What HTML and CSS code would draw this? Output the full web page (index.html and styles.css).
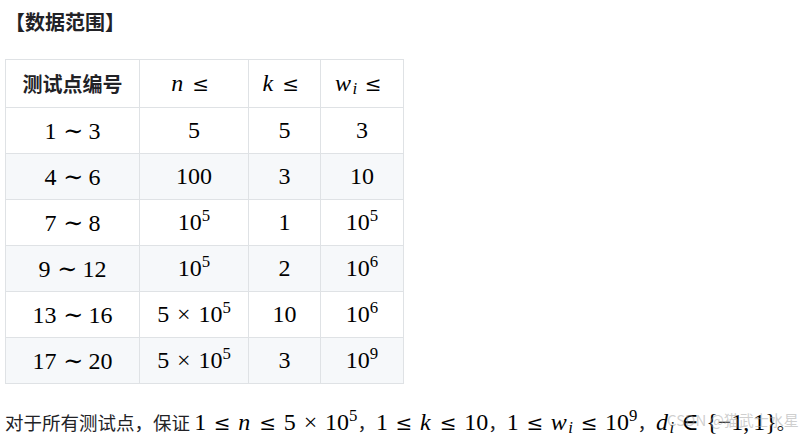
FILE: index.html
```html
<!DOCTYPE html>
<html lang="zh">
<head>
<meta charset="utf-8">
<title>数据范围</title>
<link rel="stylesheet" href="styles.css">
</head>
<body>
<div class="page">
  <p class="title">【数据范围】</p>
  <table class="range">
    <colgroup>
      <col class="c1"><col class="c2"><col class="c3"><col class="c4">
    </colgroup>
    <thead>
      <tr>
        <th class="cjk">测试点编号</th>
        <th><span class="m"><i>n</i><span class="rel le">≤</span></span></th>
        <th><span class="m"><i>k</i><span class="rel le">≤</span></span></th>
        <th><span class="m"><i>w</i><sub>i</sub><span class="rel le">≤</span></span></th>
      </tr>
    </thead>
    <tbody>
      <tr>
        <td><span class="m">1<span class="rel">∼</span>3</span></td>
        <td><span class="m">5</span></td>
        <td><span class="m">5</span></td>
        <td><span class="m">3</span></td>
      </tr>
      <tr>
        <td><span class="m">4<span class="rel">∼</span>6</span></td>
        <td><span class="m">100</span></td>
        <td><span class="m">3</span></td>
        <td><span class="m">10</span></td>
      </tr>
      <tr>
        <td><span class="m">7<span class="rel">∼</span>8</span></td>
        <td><span class="m">10<sup>5</sup></span></td>
        <td><span class="m">1</span></td>
        <td><span class="m">10<sup>5</sup></span></td>
      </tr>
      <tr>
        <td><span class="m">9<span class="rel">∼</span>12</span></td>
        <td><span class="m">10<sup>5</sup></span></td>
        <td><span class="m">2</span></td>
        <td><span class="m">10<sup>6</sup></span></td>
      </tr>
      <tr>
        <td><span class="m">13<span class="rel">∼</span>16</span></td>
        <td><span class="m">5<span class="bin">×</span>10<sup>5</sup></span></td>
        <td><span class="m">10</span></td>
        <td><span class="m">10<sup>6</sup></span></td>
      </tr>
      <tr>
        <td><span class="m">17<span class="rel">∼</span>20</span></td>
        <td><span class="m">5<span class="bin">×</span>10<sup>5</sup></span></td>
        <td><span class="m">3</span></td>
        <td><span class="m">10<sup>9</sup></span></td>
      </tr>
    </tbody>
  </table>
  <p class="note">对于所有测试点，保证 <span class="m">1<span class="rel le">≤</span><i>n</i><span class="rel le">≤</span>5<span class="bin">×</span>10<sup>5</sup></span>，<span class="m">1<span class="rel le">≤</span><i>k</i><span class="rel le">≤</span>10</span>，<span class="m">1<span class="rel le">≤</span><i>w</i><sub>i</sub><span class="rel le">≤</span>10<sup>9</sup></span>，<span class="m"><i>d</i><sub>i</sub><span class="rel">∈</span>{−1,<span class="thin"></span>1}</span>。<span class="watermark">CSDN @猫武士水星</span></p>
</div>
</body>
</html>
```

FILE: styles.css
```css
html, body {
  margin: 0;
  padding: 0;
  background: #ffffff;
}

body {
  font-family: "Noto Sans CJK SC", "Noto Sans", sans-serif;
  color: #222226;
}

.page {
  position: relative;
  padding: 7px 5px 0 5px;
  width: 801px;
  height: 430px;
  overflow: hidden;
}

.title {
  margin: 0;
  font-size: 20px;
  line-height: 30px;
  font-weight: 700;
  color: #222226;
}

.range {
  margin-top: 22px;
  border-collapse: collapse;
  table-layout: fixed;
  width: 399px;
}

.c1 { width: 134px; }
.c2 { width: 109px; }
.c3 { width: 72px; }
.c4 { width: 83px; }

.range th,
.range td {
  border: 1px solid #dfe2e5;
  padding: 0;
  text-align: center;
  vertical-align: middle;
  height: 45px;
}

.range thead th {
  height: 47px;
  background: #ffffff;
}

.range th.cjk {
  font-family: "Noto Sans CJK SC", sans-serif;
  font-size: 20px;
  font-weight: 700;
  color: #222226;
}

.range tbody tr:nth-child(even) td {
  background: #f6f8fa;
}

.m {
  font-family: "Liberation Serif", "DejaVu Serif", serif;
  font-size: 24px;
  font-weight: 400;
  color: #000000;
  white-space: nowrap;
}

.m i {
  font-style: italic;
  padding-right: 1.5px;
}

.rel {
  display: inline-block;
  width: 18.7px;
  text-align: center;
  margin: 0 6.7px;
}

.rel.le {
  font-family: "DejaVu Serif", serif;
  font-size: 20px;
  line-height: 1;
}

.bin {
  display: inline-block;
  width: 18.7px;
  text-align: center;
  margin: 0 5.3px;
}

.thin {
  display: inline-block;
  width: 4px;
}

.m sup {
  font-size: 0.7em;
  vertical-align: 0.55em;
  line-height: 0;
}

.m sub {
  font-size: 0.7em;
  font-style: italic;
  vertical-align: -0.2em;
  line-height: 0;
}

.note {
  margin: 23px 0 0 0;
  font-size: 18.5px;
  line-height: 30px;
  color: #222226;
  white-space: nowrap;
}

.watermark {
  position: absolute;
  left: 667px;
  top: 409px;
  font-family: "Noto Sans CJK SC", sans-serif;
  font-size: 15px;
  line-height: 22px;
  color: rgba(160, 160, 160, 0.5);
}
```
